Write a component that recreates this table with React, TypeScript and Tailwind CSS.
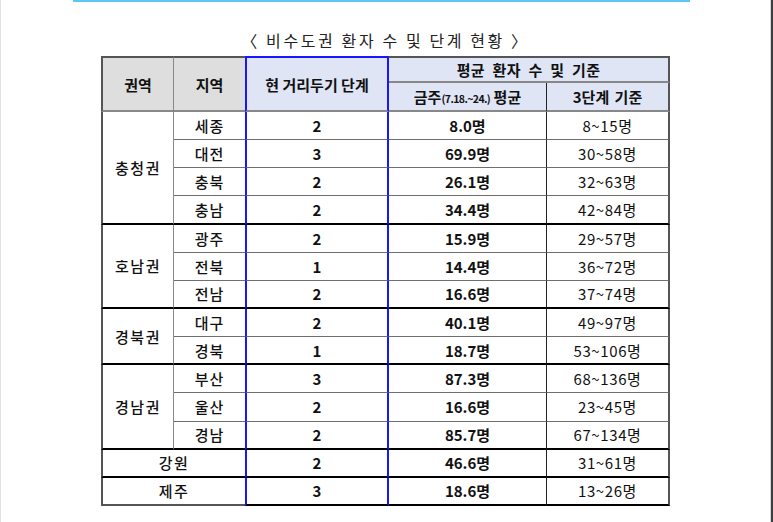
import React from "react";

type Row = { name: string; level: string; avg: string; range: string };
type Group = { region: string; rows: Row[] };

const groups: Group[] = [
  {
    region: "충청권",
    rows: [
      { name: "세종", level: "2", avg: "8.0명", range: "8~15명" },
      { name: "대전", level: "3", avg: "69.9명", range: "30~58명" },
      { name: "충북", level: "2", avg: "26.1명", range: "32~63명" },
      { name: "충남", level: "2", avg: "34.4명", range: "42~84명" },
    ],
  },
  {
    region: "호남권",
    rows: [
      { name: "광주", level: "2", avg: "15.9명", range: "29~57명" },
      { name: "전북", level: "1", avg: "14.4명", range: "36~72명" },
      { name: "전남", level: "2", avg: "16.6명", range: "37~74명" },
    ],
  },
  {
    region: "경북권",
    rows: [
      { name: "대구", level: "2", avg: "40.1명", range: "49~97명" },
      { name: "경북", level: "1", avg: "18.7명", range: "53~106명" },
    ],
  },
  {
    region: "경남권",
    rows: [
      { name: "부산", level: "3", avg: "87.3명", range: "68~136명" },
      { name: "울산", level: "2", avg: "16.6명", range: "23~45명" },
      { name: "경남", level: "2", avg: "85.7명", range: "67~134명" },
    ],
  },
];

const singles: Row[] = [
  { name: "강원", level: "2", avg: "46.6명", range: "31~61명" },
  { name: "제주", level: "3", avg: "18.6명", range: "13~26명" },
];

const font = "font-['Malgun_Gothic','Noto_Sans_CJK_KR',sans-serif]";

function ValueCells({ row, last }: { row: Row; last: boolean }) {
  const bottom = last ? "border-b-2 border-b-black" : "border-b border-b-[#6f6f6f]";
  return (
    <>
      <td className={`border-x-2 border-x-[#1616ff] text-center font-bold ${bottom}`}>{row.level}</td>
      <td className={`border-r border-r-[#222] text-center font-bold ${bottom}`}>{row.avg}</td>
      <td className={`border-r-2 border-r-[#555] text-center tracking-[0.6px] ${bottom}`}>{row.range}</td>
    </>
  );
}

export default function App() {
  return (
    <div className={`flex h-[522px] w-[773px] bg-white text-[15px] text-[#111] ${font}`}>
      <div className="w-px shrink-0 bg-[#dbe2ea]" />
      <div className="flex-1">
        <div className="ml-[72px] h-[2px] w-[617px] bg-[#5cc6f4]" />
        <div className="ml-[100px] w-[569px]">
          <h1 className="mt-[28px] text-center text-[16px] leading-[20px] tracking-[2.6px] text-[#222]">
            〈 비수도권 환자 수 및 단계 현황 〉
          </h1>
          <table className="mt-[6px] w-[569px] table-fixed border-separate border-spacing-0 leading-none">
            <colgroup>
              <col className="w-[73px]" />
              <col className="w-[71px]" />
              <col className="w-[144px]" />
              <col className="w-[158px]" />
              <col className="w-[123px]" />
            </colgroup>
            <thead>
              <tr className="h-[27px]">
                <th
                  rowSpan={2}
                  className="border-y-2 border-l-2 border-r border-t-[#555] border-b-[#888] border-l-[#555] border-r-[#888] bg-[#dedede] font-semibold"
                >
                  권역
                </th>
                <th rowSpan={2} className="border-y-2 border-t-[#555] border-b-[#888] bg-[#dedede] font-semibold">
                  지역
                </th>
                <th
                  rowSpan={2}
                  className="border-2 border-x-[#1616ff] border-t-[#1616ff] border-b-[#888] bg-[#dfe5f5] font-semibold"
                >
                  현 거리두기 단계
                </th>
                <th
                  colSpan={2}
                  className="border-y-2 border-r-2 border-t-[#555] border-b-[#888] border-r-[#555] bg-[#dfe5f5] font-semibold tracking-[0.3px] [word-spacing:4px]"
                >
                  평균 환자 수 및 기준
                </th>
              </tr>
              <tr className="h-[29px]">
                <th className="border-b-2 border-r border-b-[#888] border-r-[#222] bg-[#dfe5f5] font-semibold">
                  금주<span className="text-[10.5px] tracking-[-0.6px]">(7.18.~24.)</span> 평균
                </th>
                <th className="border-b-2 border-r-2 border-b-[#888] border-r-[#555] bg-[#dfe5f5] font-bold [word-spacing:2px]">
                  3단계 기준
                </th>
              </tr>
            </thead>
            <tbody>
              {groups.map((g) =>
                g.rows.map((row, i) => {
                  const last = i === g.rows.length - 1;
                  return (
                    <tr key={row.name} className="h-[28.15px]">
                      {i === 0 && (
                        <td
                          rowSpan={g.rows.length}
                          className="border-b-2 border-l-2 border-r border-b-black border-l-[#555] border-r-[#888] text-center font-medium tracking-[1.5px]"
                        >
                          {g.region}
                        </td>
                      )}
                      <td
                        className={`text-center font-medium tracking-[1px] ${
                          last ? "border-b-2 border-b-black" : "border-b border-b-[#6f6f6f]"
                        }`}
                      >
                        {row.name}
                      </td>
                      <ValueCells row={row} last={last} />
                    </tr>
                  );
                }),
              )}
              {singles.map((row, i) => (
                <tr key={row.name} className="h-[28.15px]">
                  <td
                    colSpan={2}
                    className={`border-l-2 border-l-[#555] text-center font-medium tracking-[1.5px] ${
                      i === singles.length - 1 ? "border-b-2 border-b-[#555]" : "border-b-2 border-b-black"
                    }`}
                  >
                    {row.name}
                  </td>
                  <ValueCells row={row} last />
                </tr>
              ))}
            </tbody>
          </table>
        </div>
      </div>
      <div className="w-px shrink-0 bg-[#cfd6de]" />
      <div className="w-[2px] shrink-0 bg-[#3d3d3d]" />
    </div>
  );
}
